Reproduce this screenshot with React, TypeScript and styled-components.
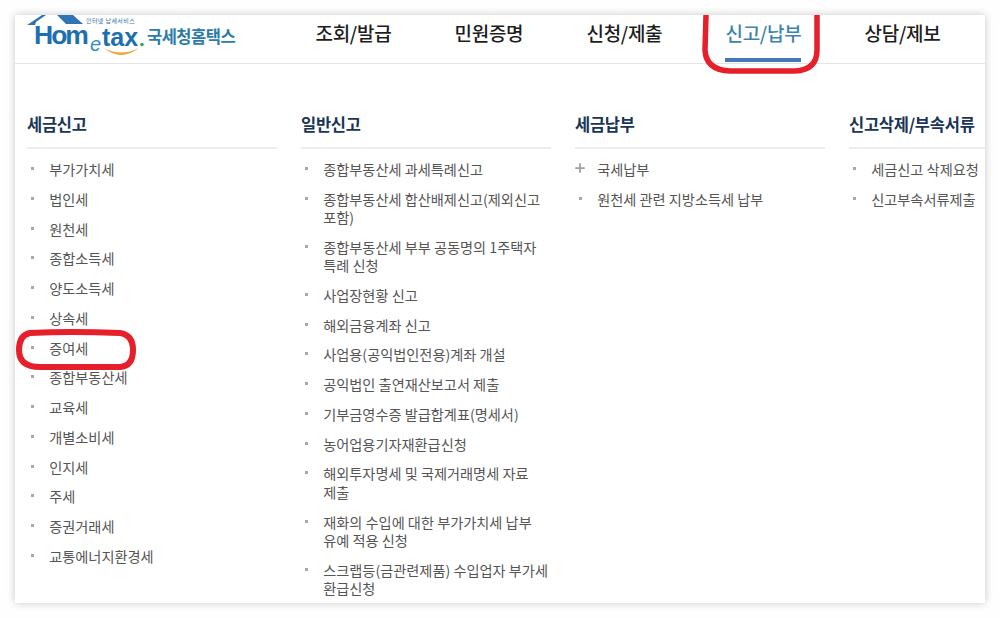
import * as React from 'react';
import styled, { createGlobalStyle } from 'styled-components';
import { Plus } from 'lucide-react';

const FONT = `"Noto Sans CJK KR", "Noto Sans", sans-serif`;

const GlobalStyle = createGlobalStyle`
  html, body {
    margin: 0;
    padding: 0;
    background: #fefefe;
    font-family: ${FONT};
  }
`;

const Page = styled.div`
  position: relative;
  width: 1000px;
  height: 618px;
  padding: 15px;
  box-sizing: border-box;
  overflow: hidden;
`;
const Panel = styled.div`
  width: 970px;
  height: 588px;
  background: #fff;
  box-shadow: 0 0 8px rgba(0, 0, 0, 0.22);
  overflow: hidden;
`;
const Header = styled.header`
  display: flex;
  height: 48px;
  border-bottom: 1px solid #e4e4e4;
`;
const Logo = styled.div`
  width: 300.5px;
  height: 48px;
  flex-shrink: 0;
  overflow: hidden;
`;
const LogoSvg = styled.svg`
  display: block;
`;
const Nav = styled.nav`
  display: flex;
  gap: 63.2px;
`;
const NavItem = styled.a<{ $active?: boolean }>`
  position: relative;
  display: block;
  height: 48px;
  padding-top: 4px;
  box-sizing: border-box;
  white-space: nowrap;
  font-size: 19px;
  line-height: 28px;
  font-weight: 500;
  letter-spacing: -0.3px;
  color: ${(p) => (p.$active ? '#3d83ab' : '#1d1d1d')};
  &::after {
    content: '';
    display: ${(p) => (p.$active ? 'block' : 'none')};
    position: absolute;
    left: 0;
    right: 0;
    bottom: 1px;
    height: 4px;
    background: #4679b4;
  }
`;
const Columns = styled.div`
  display: grid;
  grid-template-columns: repeat(4, 250px);
  column-gap: 24px;
  padding: 45px 0 0 12px;
`;
const Heading = styled.h3`
  margin: 0 0 11px;
  padding: 1px 0 8px;
  height: 29px;
  font-size: 16.5px;
  line-height: 29px;
  font-weight: 700;
  letter-spacing: -0.25px;
  color: #1a3555;
  border-bottom: 2px solid #ededed;
  white-space: nowrap;
`;
const List = styled.ul`
  list-style: none;
  margin: 0;
  padding: 0;
`;
const Item = styled.li`
  position: relative;
  margin-bottom: 11.48px;
  padding-left: 22.2px;
  font-size: 14.2px;
  line-height: 18.3px;
  color: #555;
  width: 232px;
  word-break: keep-all;
`;
const Bullet = styled.span`
  position: absolute;
  left: 4px;
  top: 7px;
  width: 3px;
  height: 3px;
  background: #a8a8a8;
`;
const PlusMark = styled(Plus)`
  position: absolute;
  left: -2px;
  top: 1px;
  color: #a0a0a0;
`;
const Marks = styled.svg`
  position: absolute;
  left: 0;
  top: 0;
  pointer-events: none;
`;

type Column = { title: string; items: string[] };

const COLUMNS: Column[] = [
  {
    title: '세금신고',
    items: [
      '부가가치세',
      '법인세',
      '원천세',
      '종합소득세',
      '양도소득세',
      '상속세',
      '증여세',
      '종합부동산세',
      '교육세',
      '개별소비세',
      '인지세',
      '주세',
      '증권거래세',
      '교통에너지환경세',
    ],
  },
  {
    title: '일반신고',
    items: [
      '종합부동산세 과세특례신고',
      '종합부동산세 합산배제신고(제외신고 포함)',
      '종합부동산세 부부 공동명의 1주택자 특례 신청',
      '사업장현황 신고',
      '해외금융계좌 신고',
      '사업용(공익법인전용)계좌 개설',
      '공익법인 출연재산보고서 제출',
      '기부금영수증 발급합계표(명세서)',
      '농어업용기자재환급신청',
      '해외투자명세 및 국제거래명세 자료 제출',
      '재화의 수입에 대한 부가가치세 납부 유예 적용 신청',
      '스크랩등(금관련제품) 수입업자 부가세 환급신청',
    ],
  },
  {
    title: '세금납부',
    items: ['국세납부', '원천세 관련 지방소득세 납부'],
  },
  {
    title: '신고삭제/부속서류',
    items: ['세금신고 삭제요청', '신고부속서류제출'],
  },
];

const NAV = ['조회/발급', '민원증명', '신청/제출', '신고/납부', '상담/제보'];

const HometaxLogo: React.FC = () => (
  <LogoSvg width="232" height="48" viewBox="15 15 232 48">
    <path d="M35 25 L27 25 L42 15 L46 15 L36 22 Z" fill="#2f75b5" />
    <path d="M57 15 L73 15 L83 24 L66 24 Z" fill="#2f75b5" />
    <text x="86" y="22.5" fontSize="6" letterSpacing="0.4" fill="#3a6ea5" fontFamily={FONT}>
      인터넷 납세서비스
    </text>
    <text x="34" y="44" fontSize="26.5" fontWeight="700" fill="#1d6fb0" fontFamily="Liberation Sans, sans-serif" letterSpacing="-2">
      Hom
    </text>
    <text x="90" y="51" fontSize="20" fill="#2f8fc4" fontFamily="Liberation Sans, sans-serif" fontStyle="italic">
      e
    </text>
    <text x="102" y="46" fontSize="25" fontWeight="700" fill="#1d6fb0" fontFamily="Liberation Sans, sans-serif">
      tax
    </text>
    <circle cx="142" cy="44.5" r="1.8" fill="#2ea84f" />
    <path d="M104 48 Q121 62 139 48 Q121 57 104 48 Z" fill="#eda63a" />
    <text x="147" y="43" fontSize="16.5" fontWeight="700" fill="#2c7ba8" fontFamily={FONT} letterSpacing="-0.5">
      국세청홈택스
    </text>
  </LogoSvg>
);

const App: React.FC = () => (
  <Page>
    <GlobalStyle />
    <Panel>
      <Header>
        <Logo>
          <HometaxLogo />
        </Logo>
        <Nav>
          {NAV.map((label) => (
            <NavItem key={label} $active={label === '신고/납부'}>
              {label}
            </NavItem>
          ))}
        </Nav>
      </Header>
      <Columns>
        {COLUMNS.map((col) => (
          <section key={col.title}>
            <Heading>{col.title}</Heading>
            <List>
              {col.items.map((item) => (
                <Item key={item}>
                  {item === '국세납부' ? <PlusMark size={14} strokeWidth={3} /> : <Bullet />}
                  {item}
                </Item>
              ))}
            </List>
          </section>
        ))}
      </Columns>
    </Panel>
    <Marks width="1000" height="618" viewBox="0 0 1000 618" fill="none">
      <path
        d="M706 15 L705 50 Q706 70 730 71 L795 71 Q817 70 817 50 L817 15"
        stroke="#e5202b"
        strokeWidth="5.5"
      />
      <path
        d="M30 333 Q70 331 120 333 Q133 335 133 350 Q133 366 120 367 L40 367 Q19 367 19 350 Q19 335 30 333 Z"
        stroke="#e5202b"
        strokeWidth="6"
      />
    </Marks>
  </Page>
);

export default App;
